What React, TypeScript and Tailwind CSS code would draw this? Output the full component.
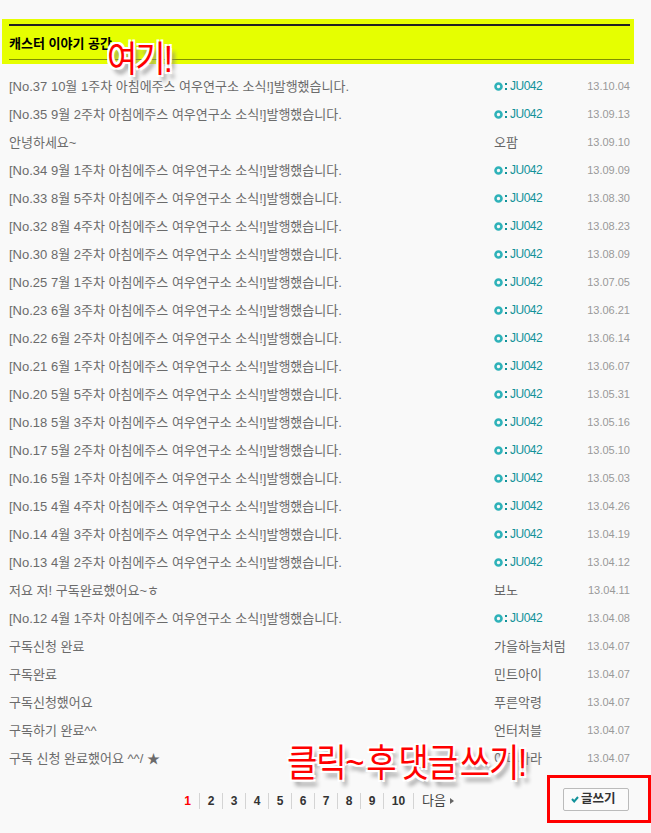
const kr = `font-['Liberation_Sans','Noto_Sans_CJK_KR',sans-serif]`;

const jooseTitle = (no: number, date: string, week: string) =>
  `[No.${no} ${date} ${week}주차 아침에주스 여우연구소 소식!]발행했습니다.`;

type Row = { title: string; author: string; date: string };

const J = "JU042";
const rows: Row[] = [
  { title: jooseTitle(37, "10월", "1"), author: J, date: "13.10.04" },
  { title: jooseTitle(35, "9월", "2"), author: J, date: "13.09.13" },
  { title: "안녕하세요~", author: "오팜", date: "13.09.10" },
  { title: jooseTitle(34, "9월", "1"), author: J, date: "13.09.09" },
  { title: jooseTitle(33, "8월", "5"), author: J, date: "13.08.30" },
  { title: jooseTitle(32, "8월", "4"), author: J, date: "13.08.23" },
  { title: jooseTitle(30, "8월", "2"), author: J, date: "13.08.09" },
  { title: jooseTitle(25, "7월", "1"), author: J, date: "13.07.05" },
  { title: jooseTitle(23, "6월", "3"), author: J, date: "13.06.21" },
  { title: jooseTitle(22, "6월", "2"), author: J, date: "13.06.14" },
  { title: jooseTitle(21, "6월", "1"), author: J, date: "13.06.07" },
  { title: jooseTitle(20, "5월", "5"), author: J, date: "13.05.31" },
  { title: jooseTitle(18, "5월", "3"), author: J, date: "13.05.16" },
  { title: jooseTitle(17, "5월", "2"), author: J, date: "13.05.10" },
  { title: jooseTitle(16, "5월", "1"), author: J, date: "13.05.03" },
  { title: jooseTitle(15, "4월", "4"), author: J, date: "13.04.26" },
  { title: jooseTitle(14, "4월", "3"), author: J, date: "13.04.19" },
  { title: jooseTitle(13, "4월", "2"), author: J, date: "13.04.12" },
  { title: "저요 저! 구독완료했어요~ㅎ", author: "보노", date: "13.04.11" },
  { title: jooseTitle(12, "4월", "1"), author: J, date: "13.04.08" },
  { title: "구독신청 완료", author: "가을하늘처럼", date: "13.04.07" },
  { title: "구독완료", author: "민트아이", date: "13.04.07" },
  { title: "구독신청했어요", author: "푸른악령", date: "13.04.07" },
  { title: "구독하기 완료^^", author: "언터처블", date: "13.04.07" },
  { title: "구독 신청 완료했어요 ^^/ ★", author: "아미사라", date: "13.04.07" },
];

const pages = ["1", "2", "3", "4", "5", "6", "7", "8", "9", "10"];

const Author = ({ name }: { name: string }) =>
  name === J ? (
    <span className="flex items-center text-[12px] tracking-[-0.5px] text-[#12929a]">
      <svg width="16" height="9" viewBox="0 0 16 9" className="shrink-0">
        <circle cx="4.5" cy="4.5" r="3" fill="none" stroke="#2fb2b9" strokeWidth="2.6" />
        <rect x="11" y="1" width="2" height="2" fill="#12929a" />
        <rect x="11" y="6" width="2" height="2" fill="#12929a" />
      </svg>
      {name}
    </span>
  ) : (
    <span className="text-[13px] text-[#666]">{name}</span>
  );

export default function App() {
  return (
    <div className={`relative h-[833px] w-[651px] overflow-hidden bg-[#f9f9f9] pt-[19px] ${kr}`}>
      <div className="ml-[2px] h-[45px] w-[632px] bg-[#e6ff00] px-[7px] pt-[5px]">
        <div className="w-[621px] border-t-2 border-[#222]" />
        <div className="flex h-[34px] w-[621px] items-center border-b border-[#7f8f00] pt-[3px] text-[13px] font-bold text-black">
          캐스터 이야기 공간
        </div>
      </div>

      <ul className="mt-[8px]">
        {rows.map((r) => (
          <li key={r.title + r.date} className="flex h-[28px] items-center pl-[9px] pr-[21px]">
            <span className="w-[485px] truncate pt-[1px] text-[13px] text-[#6b6b6b]">{r.title}</span>
            <span className="w-[93px]">
              <Author name={r.author} />
            </span>
            <span className="ml-auto text-[11px] text-[#999]">{r.date}</span>
          </li>
        ))}
      </ul>

      <div className="mt-[17px] flex h-[24px] items-center pl-[176px]">
        {pages.map((p, i) => (
          <span
            key={p}
            className={`flex h-[16px] items-center justify-center text-[12px] font-bold ${
              p === "10" ? "w-[30px]" : "w-[23px]"
            } ${i === 0 ? "text-[#ff0000]" : "border-l border-[#d4d4d4] text-[#333]"}`}
          >
            {p}
          </span>
        ))}
        <span className="flex h-[16px] items-center gap-[4px] border-l border-[#d4d4d4] pl-[8px] text-[13px] text-[#444]">
          다음
          <span className="h-0 w-0 border-y-[3px] border-l-[4px] border-y-transparent border-l-[#666]" />
        </span>
      </div>

      {/* annotations over the page */}
      <div className="absolute left-[107px] top-[38px] origin-top scale-y-[1.1] text-[33px] leading-[40px] tracking-[-2px] text-[#ff0000] [text-shadow:-2px_-2px_0_#fff,2px_-2px_0_#fff,-2px_2px_0_#fff,2px_2px_0_#fff,4px_5px_4px_#888]">
        여기!
      </div>
      <div className="absolute left-[287px] top-[738px] origin-top scale-y-[1.15] whitespace-nowrap text-[33px] leading-[44px] tracking-[-1.2px] text-[#ff0000] [word-spacing:-5px] [text-shadow:-2px_-2px_0_#fff,2px_-2px_0_#fff,-2px_2px_0_#fff,2px_2px_0_#fff,4px_5px_4px_#888]">
        클릭~ 후 댓글 쓰기!
      </div>

      <div className="absolute left-[547px] top-[775px] flex h-[48px] w-[104px] items-center justify-center border-[3px] border-[#ff0000] pr-[6px]">
        <button className="flex h-[23px] w-[66px] items-center gap-[2px] rounded-[2px] border border-[#bbb] bg-[#fbfbfb] pl-[7px] text-[12.5px] font-bold text-[#333]">
          <svg width="8" height="7" viewBox="0 0 8 7">
            <path d="M1 3 L3.2 5.5 L7 1" fill="none" stroke="#12929a" strokeWidth="2" />
          </svg>
          글쓰기
        </button>
      </div>
    </div>
  );
}
